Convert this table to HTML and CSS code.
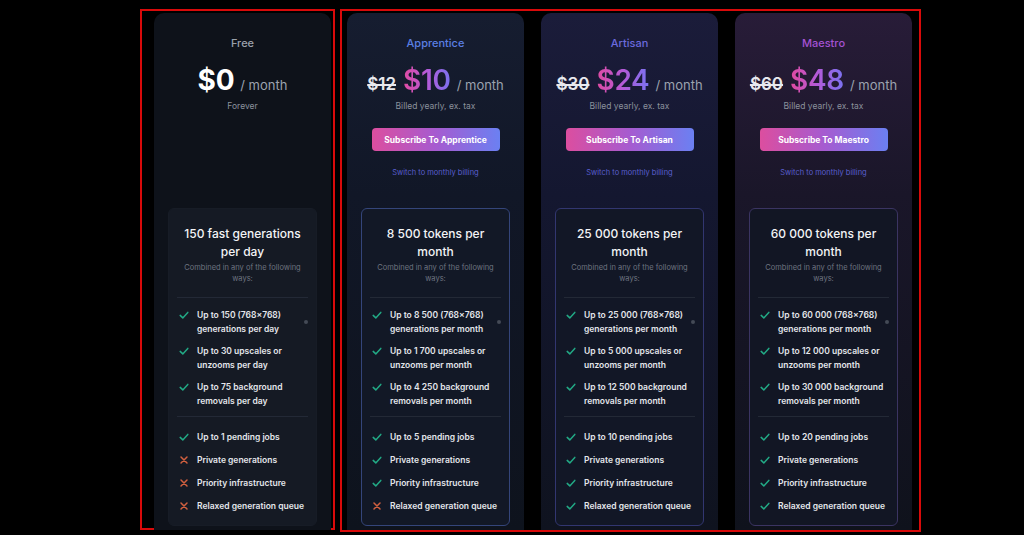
FILE: index.html
```html
<!DOCTYPE html>
<html lang="en">
<head>
<meta charset="utf-8">
<title>Pricing</title>
<link rel="stylesheet" href="styles.css">
</head>
<body>
<main class="page">
  <section class="frame frame-free">
    <article class="card card-free">
      <header class="card-head">
        <div class="plan-name name-free">Free</div>
        <div class="price-row">
          <span class="price price-free">$0</span>
          <span class="per">/ month</span>
        </div>
        <div class="billed">Forever</div>
      </header>
      <div class="features features-free">
        <div class="f-title">150 fast generations per day</div>
        <div class="f-sub">Combined in any of the following ways:</div>
        <div class="divider first"></div>
        <ul class="list list-multi">
          <li class="item"><svg class="ic" viewBox="0 0 12 12"><path class="ok" d="M2.2 6.4 L4.8 8.9 L9.8 3.4"/></svg><span class="txt">Up to 150 (768×768) generations per day</span><span class="info"></span></li>
          <li class="item"><svg class="ic" viewBox="0 0 12 12"><path class="ok" d="M2.2 6.4 L4.8 8.9 L9.8 3.4"/></svg><span class="txt">Up to 30 upscales or unzooms per day</span></li>
          <li class="item"><svg class="ic" viewBox="0 0 12 12"><path class="ok" d="M2.2 6.4 L4.8 8.9 L9.8 3.4"/></svg><span class="txt">Up to 75 background removals per day</span></li>
        </ul>
        <div class="divider second"></div>
        <ul class="list list-single">
          <li class="item"><svg class="ic" viewBox="0 0 12 12"><path class="ok" d="M2.2 6.4 L4.8 8.9 L9.8 3.4"/></svg><span class="txt">Up to 1 pending jobs</span></li>
          <li class="item"><svg class="ic" viewBox="0 0 12 12"><path class="no" d="M3 3 L9 9 M9 3 L3 9"/></svg><span class="txt">Private generations</span></li>
          <li class="item"><svg class="ic" viewBox="0 0 12 12"><path class="no" d="M3 3 L9 9 M9 3 L3 9"/></svg><span class="txt">Priority infrastructure</span></li>
          <li class="item"><svg class="ic" viewBox="0 0 12 12"><path class="no" d="M3 3 L9 9 M9 3 L3 9"/></svg><span class="txt">Relaxed generation queue</span></li>
        </ul>
      </div>
    </article>
  </section>

  <section class="frame frame-paid">
    <article class="card card-apprentice">
      <header class="card-head">
        <div class="plan-name name-apprentice">Apprentice</div>
        <div class="price-row">
          <span class="price-old">$12</span>
          <span class="price grad">$10</span>
          <span class="per">/ month</span>
        </div>
        <div class="billed">Billed yearly, ex. tax</div>
        <button class="btn">Subscribe To Apprentice</button>
        <div class="switch">Switch to monthly billing</div>
      </header>
      <div class="features features-apprentice">
        <div class="f-title">8 500 tokens per month</div>
        <div class="f-sub">Combined in any of the following ways:</div>
        <div class="divider first"></div>
        <ul class="list list-multi">
          <li class="item"><svg class="ic" viewBox="0 0 12 12"><path class="ok" d="M2.2 6.4 L4.8 8.9 L9.8 3.4"/></svg><span class="txt">Up to 8 500 (768×768) generations per month</span><span class="info"></span></li>
          <li class="item"><svg class="ic" viewBox="0 0 12 12"><path class="ok" d="M2.2 6.4 L4.8 8.9 L9.8 3.4"/></svg><span class="txt">Up to 1 700 upscales or unzooms per month</span></li>
          <li class="item"><svg class="ic" viewBox="0 0 12 12"><path class="ok" d="M2.2 6.4 L4.8 8.9 L9.8 3.4"/></svg><span class="txt">Up to 4 250 background removals per month</span></li>
        </ul>
        <div class="divider second"></div>
        <ul class="list list-single">
          <li class="item"><svg class="ic" viewBox="0 0 12 12"><path class="ok" d="M2.2 6.4 L4.8 8.9 L9.8 3.4"/></svg><span class="txt">Up to 5 pending jobs</span></li>
          <li class="item"><svg class="ic" viewBox="0 0 12 12"><path class="ok" d="M2.2 6.4 L4.8 8.9 L9.8 3.4"/></svg><span class="txt">Private generations</span></li>
          <li class="item"><svg class="ic" viewBox="0 0 12 12"><path class="ok" d="M2.2 6.4 L4.8 8.9 L9.8 3.4"/></svg><span class="txt">Priority infrastructure</span></li>
          <li class="item"><svg class="ic" viewBox="0 0 12 12"><path class="no" d="M3 3 L9 9 M9 3 L3 9"/></svg><span class="txt">Relaxed generation queue</span></li>
        </ul>
      </div>
    </article>

    <article class="card card-artisan">
      <header class="card-head">
        <div class="plan-name name-artisan">Artisan</div>
        <div class="price-row">
          <span class="price-old">$30</span>
          <span class="price grad">$24</span>
          <span class="per">/ month</span>
        </div>
        <div class="billed">Billed yearly, ex. tax</div>
        <button class="btn">Subscribe To Artisan</button>
        <div class="switch">Switch to monthly billing</div>
      </header>
      <div class="features features-artisan">
        <div class="f-title">25 000 tokens per month</div>
        <div class="f-sub">Combined in any of the following ways:</div>
        <div class="divider first"></div>
        <ul class="list list-multi">
          <li class="item"><svg class="ic" viewBox="0 0 12 12"><path class="ok" d="M2.2 6.4 L4.8 8.9 L9.8 3.4"/></svg><span class="txt">Up to 25 000 (768×768) generations per month</span><span class="info"></span></li>
          <li class="item"><svg class="ic" viewBox="0 0 12 12"><path class="ok" d="M2.2 6.4 L4.8 8.9 L9.8 3.4"/></svg><span class="txt">Up to 5 000 upscales or unzooms per month</span></li>
          <li class="item"><svg class="ic" viewBox="0 0 12 12"><path class="ok" d="M2.2 6.4 L4.8 8.9 L9.8 3.4"/></svg><span class="txt">Up to 12 500 background removals per month</span></li>
        </ul>
        <div class="divider second"></div>
        <ul class="list list-single">
          <li class="item"><svg class="ic" viewBox="0 0 12 12"><path class="ok" d="M2.2 6.4 L4.8 8.9 L9.8 3.4"/></svg><span class="txt">Up to 10 pending jobs</span></li>
          <li class="item"><svg class="ic" viewBox="0 0 12 12"><path class="ok" d="M2.2 6.4 L4.8 8.9 L9.8 3.4"/></svg><span class="txt">Private generations</span></li>
          <li class="item"><svg class="ic" viewBox="0 0 12 12"><path class="ok" d="M2.2 6.4 L4.8 8.9 L9.8 3.4"/></svg><span class="txt">Priority infrastructure</span></li>
          <li class="item"><svg class="ic" viewBox="0 0 12 12"><path class="ok" d="M2.2 6.4 L4.8 8.9 L9.8 3.4"/></svg><span class="txt">Relaxed generation queue</span></li>
        </ul>
      </div>
    </article>

    <article class="card card-maestro">
      <header class="card-head">
        <div class="plan-name name-maestro">Maestro</div>
        <div class="price-row">
          <span class="price-old">$60</span>
          <span class="price grad">$48</span>
          <span class="per">/ month</span>
        </div>
        <div class="billed">Billed yearly, ex. tax</div>
        <button class="btn">Subscribe To Maestro</button>
        <div class="switch">Switch to monthly billing</div>
      </header>
      <div class="features features-maestro">
        <div class="f-title">60 000 tokens per month</div>
        <div class="f-sub">Combined in any of the following ways:</div>
        <div class="divider first"></div>
        <ul class="list list-multi">
          <li class="item"><svg class="ic" viewBox="0 0 12 12"><path class="ok" d="M2.2 6.4 L4.8 8.9 L9.8 3.4"/></svg><span class="txt">Up to 60 000 (768×768) generations per month</span><span class="info"></span></li>
          <li class="item"><svg class="ic" viewBox="0 0 12 12"><path class="ok" d="M2.2 6.4 L4.8 8.9 L9.8 3.4"/></svg><span class="txt">Up to 12 000 upscales or unzooms per month</span></li>
          <li class="item"><svg class="ic" viewBox="0 0 12 12"><path class="ok" d="M2.2 6.4 L4.8 8.9 L9.8 3.4"/></svg><span class="txt">Up to 30 000 background removals per month</span></li>
        </ul>
        <div class="divider second"></div>
        <ul class="list list-single">
          <li class="item"><svg class="ic" viewBox="0 0 12 12"><path class="ok" d="M2.2 6.4 L4.8 8.9 L9.8 3.4"/></svg><span class="txt">Up to 20 pending jobs</span></li>
          <li class="item"><svg class="ic" viewBox="0 0 12 12"><path class="ok" d="M2.2 6.4 L4.8 8.9 L9.8 3.4"/></svg><span class="txt">Private generations</span></li>
          <li class="item"><svg class="ic" viewBox="0 0 12 12"><path class="ok" d="M2.2 6.4 L4.8 8.9 L9.8 3.4"/></svg><span class="txt">Priority infrastructure</span></li>
          <li class="item"><svg class="ic" viewBox="0 0 12 12"><path class="ok" d="M2.2 6.4 L4.8 8.9 L9.8 3.4"/></svg><span class="txt">Relaxed generation queue</span></li>
        </ul>
      </div>
    </article>
  </section>
</main>
</body>
</html>
```

FILE: styles.css
```css
* { box-sizing: border-box; }

html, body {
  margin: 0;
  padding: 0;
  background: #000;
  height: 535px;
  overflow: hidden;
}

body {
  font-family: Inter, "Noto Sans", "Liberation Sans", sans-serif;
  color: #e5e7eb;
}

.page {
  display: flex;
  align-items: flex-start;
  padding: 9px 0 0 140px;
}

.frame {
  display: flex;
  border: 2px solid #d90a0a;
  height: 521px;
}

.frame-free {
  padding: 2px 2px 0 12px;
}

.frame-paid {
  margin-left: 5px;
  padding: 2px 7px 0 5px;
  gap: 17px;
  height: 523px;
}

.card {
  width: 177px;
  height: 517px;
  border-radius: 10px 10px 0 0;
  background: #0e121a;
}

.card-apprentice {
  background: linear-gradient(180deg, #161d30 0%, #111727 35%, #0e131d 100%);
}

.card-artisan {
  background: linear-gradient(180deg, #1b1c3a 0%, #141730 35%, #0f131f 100%);
}

.card-maestro {
  background: linear-gradient(180deg, #281c38 0%, #1a1629 35%, #0f121c 100%);
}

.card-head {
  height: 195px;
  padding-top: 23px;
  text-align: center;
}

.plan-name {
  font-size: 11px;
  line-height: 14px;
  font-weight: 500;
}

.name-free { color: #9aa0aa; }
.name-apprentice { color: #5b7fe3; }
.name-artisan { color: #6b6ade; }
.name-maestro { color: #a452d2; }

.price-row {
  display: flex;
  justify-content: center;
  align-items: baseline;
  margin-top: 12px;
  height: 36px;
  line-height: 36px;
}

.price-old {
  font-size: 17px;
  font-weight: 600;
  color: #e8e9ee;
  text-decoration: line-through;
  text-decoration-thickness: 1.5px;
  margin-right: 7px;
}

.price {
  font-size: 28px;
  font-weight: 600;
  letter-spacing: -0.3px;
}

.price-free {
  color: #ffffff;
  font-weight: 700;
}

.grad {
  background: linear-gradient(90deg, #e14aa0 0%, #b45ad8 50%, #7a72f0 100%);
  -webkit-background-clip: text;
  background-clip: text;
  color: transparent;
}

.per {
  font-size: 13px;
  color: #9ca3af;
  margin-left: 6px;
}

.billed {
  margin-top: 3px;
  font-size: 8.5px;
  line-height: 11px;
  color: #8b919c;
}

.btn {
  display: block;
  margin: 16px auto 0;
  width: 128px;
  height: 23px;
  border: 0;
  border-radius: 4px;
  background: linear-gradient(90deg, #dc4e9f 0%, #a65bd0 50%, #6b80f2 100%);
  color: #fff;
  font-family: inherit;
  font-size: 8.5px;
  font-weight: 700;
  padding: 0;
}

.switch {
  margin-top: 17px;
  font-size: 7.5px;
  line-height: 10px;
  color: #5a5fcf;
}

.features {
  margin: 0 14px;
  border: 1px solid #1a1f2a;
  border-radius: 6px;
  background: #141923;
  padding: 16px 8px 12px;
}

.features-free { border-color: #171c26; background: #151a24; }
.features-apprentice { border-color: #34457a; background: #121826; }
.features-artisan { border-color: #323670; background: #121726; }
.features-maestro { border-color: #3b3462; background: #121624; }

.f-title {
  font-size: 12px;
  line-height: 18px;
  font-weight: 500;
  color: #f3f4f6;
  text-align: center;
  padding: 0 4px;
}

.f-sub {
  margin-top: 1px;
  font-size: 7.5px;
  line-height: 11px;
  color: #6e7480;
  text-align: center;
  padding: 0 6px;
}

.divider {
  height: 1px;
  background: #232936;
}

.divider.first { margin: 13px 0 10px; }
.divider.second { margin: 8px 0 13px; }

.list {
  list-style: none;
  margin: 0;
  padding: 0 0 0 1px;
  display: flex;
  flex-direction: column;
}

.list-multi { gap: 8px; }
.list-single { gap: 9px; }

.item {
  display: flex;
  align-items: flex-start;
  font-size: 8.5px;
  line-height: 14px;
  font-weight: 600;
  color: #e4e6eb;
}

.ic {
  flex: 0 0 12px;
  width: 12px;
  height: 12px;
  margin-top: 1px;
  margin-right: 7px;
}

.ic path {
  fill: none;
  stroke-width: 1.5;
  stroke-linecap: round;
  stroke-linejoin: round;
}

.ic .ok { stroke: #22a985; }
.ic .no { stroke: #d2603f; }

.txt {
  flex: 1 1 auto;
}

.list-multi .txt {
  max-width: 110px;
}

.info {
  flex: 0 0 4px;
  width: 4px;
  height: 4px;
  border-radius: 50%;
  background: #444a56;
  align-self: center;
  margin-left: auto;
  margin-right: 0;
}
```
